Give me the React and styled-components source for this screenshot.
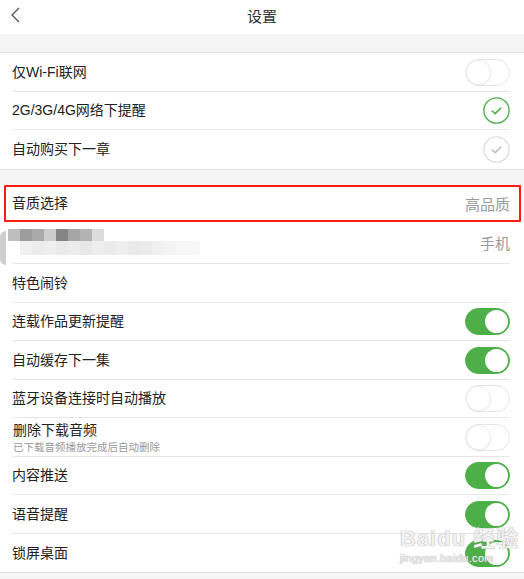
import React from 'react'
import styled, { createGlobalStyle, css } from 'styled-components'

const GlobalStyle = createGlobalStyle`
  html, body {
    margin: 0;
    padding: 0;
    background: #f5f5f5;
    font-family: "Liberation Sans", "Noto Sans CJK SC", sans-serif;
  }
`

const Page = styled.div`
  width: 524px;
  height: 579px;
  overflow: hidden;
  position: relative;
  background: #f5f5f5;
`

const Header = styled.div`
  height: 34px;
  background: #fff;
  display: flex;
  align-items: center;
  justify-content: center;
  position: relative;
`

const BackBtn = styled.div`
  position: absolute;
  left: 10px;
  top: 7px;
  width: 12px;
  height: 16px;
`

const Title = styled.span`
  font-size: 15px;
  color: #333;
  margin-top: -4px;
`

const Gap = styled.div`
  height: ${p => p.h}px;
  background: #f5f5f5;
`

const Group = styled.div`
  background: #fff;
  border-top: 1px solid #e2e2e2;
  border-bottom: 1px solid #e2e2e2;
  ${p => p.noTop && css`border-top: none;`}
`

const Row = styled.div`
  height: ${p => p.h || 38.5}px;
  box-sizing: border-box;
  margin: 0 14px 0 12px;
  padding-top: 1px;
  display: flex;
  align-items: center;
  justify-content: space-between;
  border-bottom: 1px solid #e6e6e6;
  position: relative;
  &:last-child {
    border-bottom: none;
  }
  ${p => p.highlight && css`
    border-bottom: none;
    &::after {
      content: '';
      position: absolute;
      left: -8px;
      right: -11px;
      top: 0;
      bottom: -1px;
      border: 2px solid #ff1a12;
      border-radius: 1px;
    }
  `}
`

const Label = styled.div`
  display: flex;
  flex-direction: column;
  gap: 2px;
  padding-left: 1px;
`

const Text = styled.span`
  font-size: 14px;
  color: #222;
  line-height: 17px;
`

const Sub = styled.span`
  font-size: 10.5px;
  color: #999;
  line-height: 12px;
`

const Value = styled.span`
  font-size: 15px;
  color: #9a9a9a;
`

const Toggle = styled.div`
  width: 45px;
  height: 27px;
  box-sizing: border-box;
  border-radius: 14px;
  position: relative;
  background: ${p => (p.on ? '#4daf47' : '#fff')};
  border: 1px solid ${p => (p.on ? '#4daf47' : '#e4e4e4')};
  &::after {
    content: '';
    position: absolute;
    top: 1px;
    ${p => (p.on ? 'right: 1px;' : 'left: 1px;')}
    width: 23px;
    height: 23px;
    border-radius: 50%;
    background: #fff;
    box-shadow: ${p => (p.on ? 'none' : '0 0 0 1px #ececec, 1px 1px 2px rgba(0,0,0,0.08)')};
  }
`

const CheckWrap = styled.div`
  width: 27px;
  height: 27px;
`

const Mosaic = styled.div`
  display: flex;
  flex-direction: column;
  margin-left: -12px;
  position: relative;
  padding-left: 8px;
  &::before {
    content: '';
    position: absolute;
    left: 0;
    top: 2px;
    width: 6px;
    height: 34px;
    border-radius: 6px 0 0 6px;
    background: #cfcfd3;
  }
`

const MosaicLine = styled.div`
  display: flex;
  padding-left: ${p => p.indent || 0}px;
`

const Tile = styled.div`
  width: 12px;
  height: ${p => p.h}px;
  background: ${p => p.c};
`

const Watermark = styled.div`
  position: absolute;
  left: 400px;
  top: 518px;
  display: flex;
  flex-direction: column;
  white-space: nowrap;
  color: rgba(255, 255, 255, 0.85);
  text-shadow: 0 0 1px #aaa, 0 0 1px #aaa;
  font-family: "Liberation Sans", "Noto Sans CJK SC", sans-serif;
  pointer-events: none;
`

const WmTop = styled.div`
  font-size: 22px;
  font-weight: bold;
  letter-spacing: 1px;
  line-height: 26px;
  margin-top: 8px;
`

const WmBottom = styled.div`
  font-size: 11px;
  line-height: 13px;
  letter-spacing: 0.3px;
`

const Check = ({ on }) => (
  <CheckWrap>
    <svg width="27" height="27" viewBox="0 0 27 27">
      <circle cx="13.5" cy="13.5" r="12.6" fill="none" stroke={on ? '#4daf47' : '#dedede'} strokeWidth="1.4" />
      <polyline points="9.2,14 12.2,16.6 17.8,11" fill="none" stroke={on ? '#4daf47' : '#bdbdbd'} strokeWidth="1.6" strokeLinecap="round" strokeLinejoin="round" />
    </svg>
  </CheckWrap>
)

const darkTiles = ['#bdbdbd', '#9c9c9c', '#aaaaaa', '#cdcdcd', '#858585', '#a5a5a5', '#b3b3b3', '#dcdcdc']
const lightTiles = ['#f0f0f0', '#ececec', '#efefef', '#e9e9e9', '#ededed', '#e8e8e8', '#eeeeee', '#ebebeb', '#efefef', '#e9e9e9', '#ececec', '#f1f1f1', '#f3f3f3', '#f6f6f6', '#f8f8f8']

const Settings = () => (
  <Page>
    <Header>
      <BackBtn>
        <svg width="12" height="16" viewBox="0 0 12 16">
          <polyline points="9,1 2,8 9,15" fill="none" stroke="#555" strokeWidth="1.3" />
        </svg>
      </BackBtn>
      <Title>设置</Title>
    </Header>
    <Gap h={18} />
    <Group>
      <Row><Text>仅Wi-Fi联网</Text><Toggle /></Row>
      <Row><Text>2G/3G/4G网络下提醒</Text><Check on /></Row>
      <Row><Text>自动购买下一章</Text><Check /></Row>
    </Group>
    <Gap h={15} />
    <Group noTop>
      <Row h={36} highlight><Text>音质选择</Text><Value>高品质</Value></Row>
      <Row h={43}>
        <Mosaic>
          <MosaicLine>
            {darkTiles.map((c, i) => <Tile key={i} c={c} h={12} />)}
          </MosaicLine>
          <MosaicLine indent={12}>
            {lightTiles.map((c, i) => <Tile key={i} c={c} h={14} />)}
          </MosaicLine>
        </Mosaic>
        <Value>手机</Value>
      </Row>
      <Row h={39}><Text>特色闹铃</Text></Row>
      <Row><Text>连载作品更新提醒</Text><Toggle on /></Row>
      <Row><Text>自动缓存下一集</Text><Toggle on /></Row>
      <Row><Text>蓝牙设备连接时自动播放</Text><Toggle /></Row>
      <Row>
        <Label>
          <Text>删除下载音频</Text>
          <Sub>已下载音频播放完成后自动删除</Sub>
        </Label>
        <Toggle />
      </Row>
      <Row><Text>内容推送</Text><Toggle on /></Row>
      <Row><Text>语音提醒</Text><Toggle on /></Row>
      <Row><Text>锁屏桌面</Text><Toggle on /></Row>
    </Group>
    <Watermark>
      <WmTop>Baidu 经验</WmTop>
      <WmBottom>jingyan.baidu.com</WmBottom>
    </Watermark>
  </Page>
)

const App = () => (
  <>
    <GlobalStyle />
    <Settings />
  </>
)

export default App
